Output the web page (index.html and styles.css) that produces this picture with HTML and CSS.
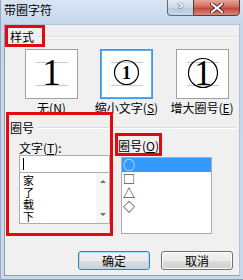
FILE: index.html
```html
<!DOCTYPE html>
<html lang="zh-CN">
<head>
<meta charset="utf-8">
<title>带圈字符</title>
<link rel="stylesheet" href="styles.css">
</head>
<body>
<div class="window">
  <div class="titlebar">
    <span class="title">带圈字符</span>
    <div class="caption">
      <div class="cap-help">?</div>
      <div class="cap-close">
        <svg width="14" height="10" viewBox="0 0 14 10"><path d="M2 1 L12 9 M12 1 L2 9" stroke="#3a1a16" stroke-width="3.6" stroke-linecap="square"/><path d="M2 1 L12 9 M12 1 L2 9" stroke="#fff" stroke-width="2" stroke-linecap="square"/></svg>
      </div>
    </div>
  </div>
  <div class="client">
    <div class="group-head h1"><span>样式</span><i class="rule"></i></div>
    <div class="styles">
      <div class="opt">
        <div class="preview">
          <svg viewBox="0 0 51 48" width="51" height="48"><line x1="10" y1="12.5" x2="42" y2="12.5" class="gl"/><line x1="10" y1="35.5" x2="42" y2="35.5" class="gl"/><text x="25.5" y="35" class="digit big">1</text></svg>
        </div>
        <div class="opt-label">无(<u>N</u>)</div>
      </div>
      <div class="opt">
        <div class="preview sel">
          <svg viewBox="0 0 51 48" width="51" height="48"><line x1="10" y1="12.5" x2="42" y2="12.5" class="gl"/><line x1="10" y1="35.5" x2="42" y2="35.5" class="gl"/><circle cx="25.5" cy="22.5" r="12" class="ring"/><text x="25.5" y="28.5" class="digit small">1</text></svg>
        </div>
        <div class="opt-label">缩小文字(<u>S</u>)</div>
      </div>
      <div class="opt">
        <div class="preview">
          <svg viewBox="0 0 51 48" width="51" height="48"><line x1="10" y1="12.5" x2="42" y2="12.5" class="gl"/><line x1="10" y1="35.5" x2="42" y2="35.5" class="gl"/><circle cx="26" cy="23" r="14.5" class="ring"/><text x="26" y="35" class="digit mid">1</text></svg>
        </div>
        <div class="opt-label">增大圈号(<u>E</u>)</div>
      </div>
    </div>
    <div class="group-head h2"><span>圈号</span><i class="rule"></i></div>
    <div class="pickers">
      <div class="col-left">
        <div class="field-label">文字(<u>T</u>):</div>
        <div class="textbox"><span class="caret"></span></div>
        <div class="listbox">
          <div class="items">
            <div>家</div>
            <div>了</div>
            <div>载</div>
            <div>下</div>
          </div>
          <div class="scrollbar">
            <div class="sb-btn"><span class="tri up"></span></div>
            <div class="sb-track"></div>
            <div class="sb-btn"><span class="tri down"></span></div>
          </div>
        </div>
      </div>
      <div class="col-right">
        <div class="field-label">圈号(<u>O</u>):</div>
        <div class="shapes">
          <div class="shape selected">○</div>
          <div class="shape">□</div>
          <div class="shape">△</div>
          <div class="shape">◇</div>
        </div>
      </div>
    </div>
    <div class="buttons">
      <button class="btn default">确定</button>
      <button class="btn">取消</button>
    </div>
    <div class="mark m1"></div>
    <div class="mark m2"></div>
    <div class="mark m3"></div>
  </div>
</div>
</body>
</html>
```
FILE: styles.css
```css
html, body {
  margin: 0;
  padding: 0;
}
body {
  width: 243px;
  height: 280px;
  overflow: hidden;
  font-family: "Noto Sans CJK SC", "Liberation Sans", sans-serif;
  font-size: 12px;
  color: #000;
}
.window {
  width: 243px;
  height: 280px;
  box-sizing: border-box;
  padding: 0 3px 3px 3px;
  display: flex;
  flex-direction: column;
  background: linear-gradient(#d9e5f4 0px, #c6d7ec 24px, #c9d9ed 100%);
  border-left: 1px solid #9aa9bb;
  border-bottom: 1px solid #8b99aa;
}
.titlebar {
  height: 24px;
  display: flex;
  align-items: flex-start;
  flex: none;
}
.title {
  line-height: 20px;
  font-size: 12px;
}
.caption {
  margin-left: auto;
  display: flex;
  height: 17px;
  margin-top: -1px;
}
.cap-help {
  width: 26px;
  height: 17px;
  box-sizing: border-box;
  border: 1px solid #5b6a7e;
  border-right: none;
  border-radius: 0 0 0 4px;
  background: linear-gradient(#e3ebf5, #cbd8e8 50%, #b8c9de 51%, #c9d8ea);
  color: #fff;
  font-family: "DejaVu Sans", sans-serif;
  font-weight: bold;
  font-size: 11px;
  line-height: 15px;
  text-align: center;
  text-shadow: 0 0 1px #2a3a50, 0 0 1px #2a3a50;
}
.cap-close {
  width: 47px;
  height: 17px;
  box-sizing: border-box;
  border: 1px solid #5b3a36;
  border-radius: 0 0 4px 0;
  background: linear-gradient(#e6a79c, #d36b5e 45%, #c3473a 55%, #d78a7d);
  display: flex;
  align-items: center;
  justify-content: center;
}
.cap-close svg {
  display: block;
}
.client {
  flex: 1;
  position: relative;
  background: #f0f0f0;
  border: 1px solid #8d9cb0;
  border-top-color: #b3c2d4;
  border-right-color: #b3c2d4;
}
.group-head {
  display: flex;
  align-items: center;
  padding-left: 5px;
  padding-right: 2px;
}
.group-head span {
  line-height: 14px;
}
.group-head .rule {
  flex: 1;
  height: 0;
  border-top: 1px solid #d5dfe5;
  border-bottom: 1px solid #ffffff;
  margin-left: 4px;
}
.h1 {
  height: 24px;
}
.h2 {
  height: 22px;
}
.styles {
  display: grid;
  grid-template-columns: 75px 75px 76px;
  padding-left: 9px;
}
.opt {
  display: flex;
  flex-direction: column;
  align-items: center;
}
.preview {
  width: 53px;
  height: 50px;
  box-sizing: border-box;
  border: 1px solid #a0a0a0;
  background: #fff;
}
.preview.sel {
  border-color: #3c9be8;
  box-shadow: inset 0 0 0 1px #5aaef0;
}
.preview svg {
  display: block;
}
.gl {
  stroke: #c8c8c8;
  stroke-width: 1;
}
.ring {
  fill: none;
  stroke: #000;
  stroke-width: 1.2;
}
.digit {
  font-family: "Liberation Serif", serif;
  text-anchor: middle;
  fill: #000;
}
.big {
  font-size: 37px;
}
.small {
  font-size: 18px;
  font-weight: bold;
}
.mid {
  font-size: 35px;
}
.opt-label {
  height: 18px;
  line-height: 18px;
  white-space: nowrap;
}
.pickers {
  display: flex;
  align-items: flex-start;
  padding-left: 14px;
}
.col-left {
  width: 91px;
  padding-top: 2px;
}
.col-right {
  margin-left: 8px;
  width: 96px;
}
.field-label {
  height: 14px;
  line-height: 14px;
  white-space: nowrap;
}
.textbox {
  height: 18px;
  box-sizing: border-box;
  border: 1px solid #abadb3;
  background: #fff;
  padding: 2px 0 0 3px;
}
.caret {
  display: block;
  width: 1px;
  height: 12px;
  background: #000;
}
.listbox {
  height: 51px;
  box-sizing: border-box;
  border: 1px solid #abadb3;
  border-top: none;
  background: #fff;
  display: flex;
  overflow: hidden;
}
.items {
  flex: 1;
  padding: 1px 0 0 3px;
  font-size: 11px;
  line-height: 12px;
  overflow: hidden;
}
.scrollbar {
  width: 13px;
  display: flex;
  flex-direction: column;
  background: #f7f7f7;
}
.sb-btn {
  height: 17px;
  display: flex;
  align-items: center;
  justify-content: center;
}
.sb-track {
  flex: 1;
}
.tri {
  width: 0;
  height: 0;
  border-left: 3px solid transparent;
  border-right: 3px solid transparent;
}
.tri.up {
  border-bottom: 3px solid #707070;
}
.tri.down {
  border-top: 3px solid #707070;
}
.shapes {
  margin-top: 4px;
  margin-left: 3px;
  width: 91px;
  height: 77px;
  box-sizing: border-box;
  border: 1px solid #abadb3;
  background: #fff;
}
.shape {
  height: 14px;
  line-height: 14px;
  padding-left: 1px;
  font-size: 12px;
}
.shape.selected {
  background: #3399ff;
  color: #fff;
}
.buttons {
  display: flex;
  justify-content: flex-end;
  gap: 11px;
  padding-right: 6px;
  margin-top: 17px;
}
.btn {
  font-family: "Noto Sans CJK SC", sans-serif;
  font-size: 12px;
  width: 72px;
  height: 19px;
  padding: 0;
  line-height: 16px;
  border: 1px solid #707070;
  border-radius: 3px;
  background: linear-gradient(#f2f2f2, #ebebeb 50%, #dddddd 51%, #cfcfcf);
  box-shadow: inset 0 0 0 1px #fcfcfc;
  color: #000;
}
.btn.default {
  border-color: #3c7fb1;
  box-shadow: inset 0 0 0 1px #a8def8;
}
.mark {
  position: absolute;
  box-sizing: border-box;
  border: 3px solid #e20a0a;
}
.m1 {
  left: 0;
  top: 0;
  width: 40px;
  height: 22px;
}
.m2 {
  left: 1px;
  top: 87px;
  width: 107px;
  height: 124px;
}
.m3 {
  left: 110px;
  top: 108px;
  width: 47px;
  height: 23px;
}
```
